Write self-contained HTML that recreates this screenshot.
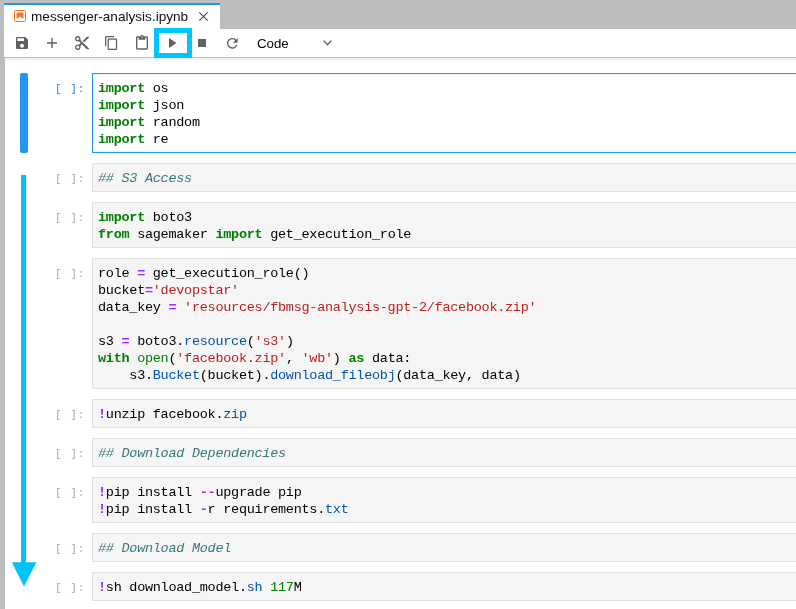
<!DOCTYPE html>
<html><head><meta charset="utf-8">
<style>
html,body{margin:0;padding:0;}
body{will-change:transform;width:796px;height:609px;overflow:hidden;position:relative;background:#fff;font-family:"Liberation Sans",sans-serif;}
.abs{position:absolute;}
#topbar{left:0;top:0;width:796px;height:29px;background:#bdbdbd;}
#leftstrip{left:0;top:5px;width:5px;height:604px;background:#bdbdbd;}
#tab{left:4px;top:3px;width:216px;height:24px;background:#fff;border-top:2px solid #2196f3;}
#tabtitle{left:31px;top:9px;font-size:13.6px;color:#111;white-space:nowrap;line-height:16px;}
#toolbar{left:4px;top:29px;width:792px;height:28px;background:#fff;border-bottom:1px solid #bdbdbd;}
svg{position:absolute;overflow:visible;}
.prompt{position:absolute;left:55px;font-family:"Liberation Mono",monospace;font-size:11px;letter-spacing:1px;margin-top:1px;color:#a8a8a8;line-height:17px;white-space:pre;}
.box.active{background:#fff;border-color:#2196f3;box-shadow:inset 0 0 3px rgba(100,181,246,0.35);}
.prompt.active{color:#307fc1;}
.box{position:absolute;left:92px;width:720px;background:#f5f5f5;border:1px solid #e0e0e0;box-sizing:border-box;}
.code{position:absolute;left:98px;font-family:"Liberation Mono",monospace;font-size:13.5px;letter-spacing:-0.274px;color:#000;line-height:17px;white-space:pre;}
.k{color:#008000;font-weight:bold;}
.b{color:#008000;}
.o{color:#aa22ff;font-weight:bold;}
.s{color:#ba2121;}
.p{color:#0055aa;}
.h{color:#387878;font-style:italic;}
.m{color:#aa22ff;font-weight:bold;}
.n{color:#008000;}
</style></head><body>
<div id="topbar" class="abs"></div>
<div id="leftstrip" class="abs"></div>
<div id="tab" class="abs"></div>
<!-- notebook icon -->
<svg style="left:14px;top:10px" width="12" height="12" viewBox="0 0 12 12">
 <rect x="0.5" y="0.5" width="11" height="11" rx="1" fill="none" stroke="#f37726" stroke-width="1"/>
 <path d="M2.5 2.5h7v6.5l-3.5-2.2-3.5 2.2z" fill="#f37726"/>
</svg>
<div id="tabtitle" class="abs">messenger-analysis.ipynb</div>
<!-- close X -->
<svg style="left:198.5px;top:11.8px" width="9" height="9" viewBox="0 0 9 9">
 <path d="M0.3 0.3L8.7 8.7M8.7 0.3L0.3 8.7" stroke="#4a4a4a" stroke-width="1.15"/>
</svg>
<div id="toolbar" class="abs"></div>
<!-- save -->
<svg style="left:16px;top:37px" width="12" height="12" viewBox="3 3 18 18">
 <path fill="#616161" d="M17 3H5c-1.11 0-2 .9-2 2v14c0 1.1.89 2 2 2h14c1.1 0 2-.9 2-2V7l-4-4zm-5 16c-1.66 0-3-1.34-3-3s1.34-3 3-3 3 1.34 3 3-1.34 3-3 3zm3-10H5V5h10v4z"/>
</svg>
<!-- plus -->
<svg style="left:47px;top:38px" width="10" height="10" viewBox="0 0 10 10">
 <path d="M5 0V10M0 5H10" stroke="#616161" stroke-width="1.4"/>
</svg>
<!-- scissors -->
<svg style="left:75px;top:36px" width="14" height="14" viewBox="2 2 20 20">
 <path fill="#616161" d="M9.64 7.64c.23-.5.36-1.050.36-1.64 0-2.21-1.79-4-4-4S2 3.79 2 6s1.79 4 4 4c.59 0 1.14-.13 1.64-.36L10 12l-2.360 2.36C7.14 14.13 6.59 14 6 14c-2.21 0-4 1.79-4 4s1.79 4 4 4 4-1.79 4-4c0-.59-.13-1.14-.36-1.64L12 14l7 7h3v-1L9.64 7.64zM6 8c-1.1 0-2-.89-2-2s.9-2 2-2 2 .89 2 2-.9 2-2 2zm0 12c-1.1 0-2-.89-2-2s.9-2 2-2 2 .89 2 2-.9 2-2 2zm6-7.5c-.28 0-.5-.22-.5-.5s.22-.5.5-.5.5.22.5.5-.22.5-.5.5zM19 3l-6 6 2 2 7-7V3z"/>
</svg>
<!-- copy -->
<svg style="left:105px;top:35.8px" width="12.2" height="14" viewBox="2 1 19 22">
 <path fill="#616161" d="M16 1H4c-1.1 0-2 .9-2 2v14h2V3h12V1zm3 4H8c-1.1 0-2 .9-2 2v14c0 1.1.9 2 2 2h11c1.1 0 2-.9 2-2V7c0-1.1-.9-2-2-2zm0 16H8V7h11v14z"/>
</svg>
<!-- paste -->
<svg style="left:136px;top:35px" width="12" height="14.67" viewBox="3 0 18 22">
 <path fill="#616161" d="M19 2h-4.18C14.4.84 13.3 0 12 0c-1.3 0-2.4.84-2.82 2H5c-1.1 0-2 .9-2 2v16c0 1.1.9 2 2 2h14c1.1 0 2-.9 2-2V4c0-1.1-.9-2-2-2zm-7 0c.55 0 1 .45 1 1s-.45 1-1 1-1-.45-1-1 .45-1 1-1zm7 18H5V4h2v3h10V4h2v16z"/>
</svg>
<!-- run highlight box -->
<div class="abs" style="left:154px;top:28px;width:28px;height:20px;border:5px solid #00c3fa;"></div>
<!-- play -->
<svg style="left:169px;top:38px" width="8" height="10" viewBox="0 0 8 10">
 <path d="M0 0L7.5 5L0 10z" fill="#616161"/>
</svg>
<!-- stop -->
<div class="abs" style="left:198px;top:39px;width:8px;height:8px;background:#616161;"></div>
<!-- restart -->
<svg style="left:227px;top:37.8px" width="10.7" height="10.7" viewBox="4 4 16 16">
 <path fill="#616161" d="M17.65 6.35C16.2 4.9 14.21 4 12 4c-4.42 0-7.99 3.58-7.99 8s3.57 8 7.99 8c3.73 0 6.840-2.55 7.73-6h-2.08c-.82 2.33-3.04 4-5.65 4-3.31 0-6-2.69-6-6s2.69-6 6-6c1.66 0 3.14.69 4.22 1.78L13 11h7V4l-2.35 2.35z"/>
</svg>
<div class="abs" style="left:257px;top:35.6px;font-size:13.25px;color:#000;line-height:16px;">Code</div>
<!-- chevron -->
<svg style="left:322.7px;top:40.2px" width="9" height="6" viewBox="0 0 9 6">
 <path d="M0.6 0.6L4.5 4.7L8.4 0.6" fill="none" stroke="#5a5a5a" stroke-width="1.35"/>
</svg>

<div class="abs" style="left:5px;top:58px;width:791px;height:3px;background:linear-gradient(#ebebeb,#f6f6f6 50%,#fff);"></div>
<!-- cells -->
<div class="box active" style="top:73px;height:80px;"></div>
<div class="prompt active" style="top:80px;">[ ]:</div>
<div class="code" style="top:80px;"><span class="k">import</span> os
<span class="k">import</span> json
<span class="k">import</span> random
<span class="k">import</span> re</div>
<div class="box" style="top:163px;height:29px;"></div>
<div class="prompt" style="top:170px;">[ ]:</div>
<div class="code" style="top:170px;"><span class="h">## S3 Access</span></div>
<div class="box" style="top:202px;height:46px;"></div>
<div class="prompt" style="top:209px;">[ ]:</div>
<div class="code" style="top:209px;"><span class="k">import</span> boto3
<span class="k">from</span> sagemaker <span class="k">import</span> get_execution_role</div>
<div class="box" style="top:258px;height:131px;"></div>
<div class="prompt" style="top:265px;">[ ]:</div>
<div class="code" style="top:265px;">role <span class="o">=</span> get_execution_role()
bucket<span class="o">=</span><span class="s">'devopstar'</span>
data_key <span class="o">=</span> <span class="s">'resources/fbmsg-analysis-gpt-2/facebook.zip'</span>

s3 <span class="o">=</span> boto3.<span class="p">resource</span>(<span class="s">'s3'</span>)
<span class="k">with</span> <span class="b">open</span>(<span class="s">'facebook.zip'</span>, <span class="s">'wb'</span>) <span class="k">as</span> data:
    s3.<span class="p">Bucket</span>(bucket).<span class="p">download_fileobj</span>(data_key, data)</div>
<div class="box" style="top:399px;height:29px;"></div>
<div class="prompt" style="top:406px;">[ ]:</div>
<div class="code" style="top:406px;"><span class="m">!</span>unzip facebook.<span class="p">zip</span></div>
<div class="box" style="top:438px;height:29px;"></div>
<div class="prompt" style="top:445px;">[ ]:</div>
<div class="code" style="top:445px;"><span class="h">## Download Dependencies</span></div>
<div class="box" style="top:477px;height:46px;"></div>
<div class="prompt" style="top:484px;">[ ]:</div>
<div class="code" style="top:484px;"><span class="m">!</span>pip install <span class="o">--</span>upgrade pip
<span class="m">!</span>pip install <span class="o">-</span>r requirements.<span class="p">txt</span></div>
<div class="box" style="top:533px;height:29px;"></div>
<div class="prompt" style="top:540px;">[ ]:</div>
<div class="code" style="top:540px;"><span class="h">## Download Model</span></div>
<div class="box" style="top:572px;height:29px;"></div>
<div class="prompt" style="top:579px;">[ ]:</div>
<div class="code" style="top:579px;"><span class="m">!</span>sh download_model.<span class="p">sh</span> <span class="n">117</span>M</div>
<!-- active bar -->
<div class="abs" style="left:20px;top:73px;width:8px;height:80px;background:#2196f3;border-radius:2px;"></div>
<!-- arrow -->
<div class="abs" style="left:21px;top:175px;width:5px;height:390px;background:#00c3f9;"></div>
<svg style="left:0;top:0" width="796" height="609" viewBox="0 0 796 609">
 <path d="M11.8 562.2H36.4L24 586.5z" fill="#00c3f9"/>
</svg>
</body></html>
